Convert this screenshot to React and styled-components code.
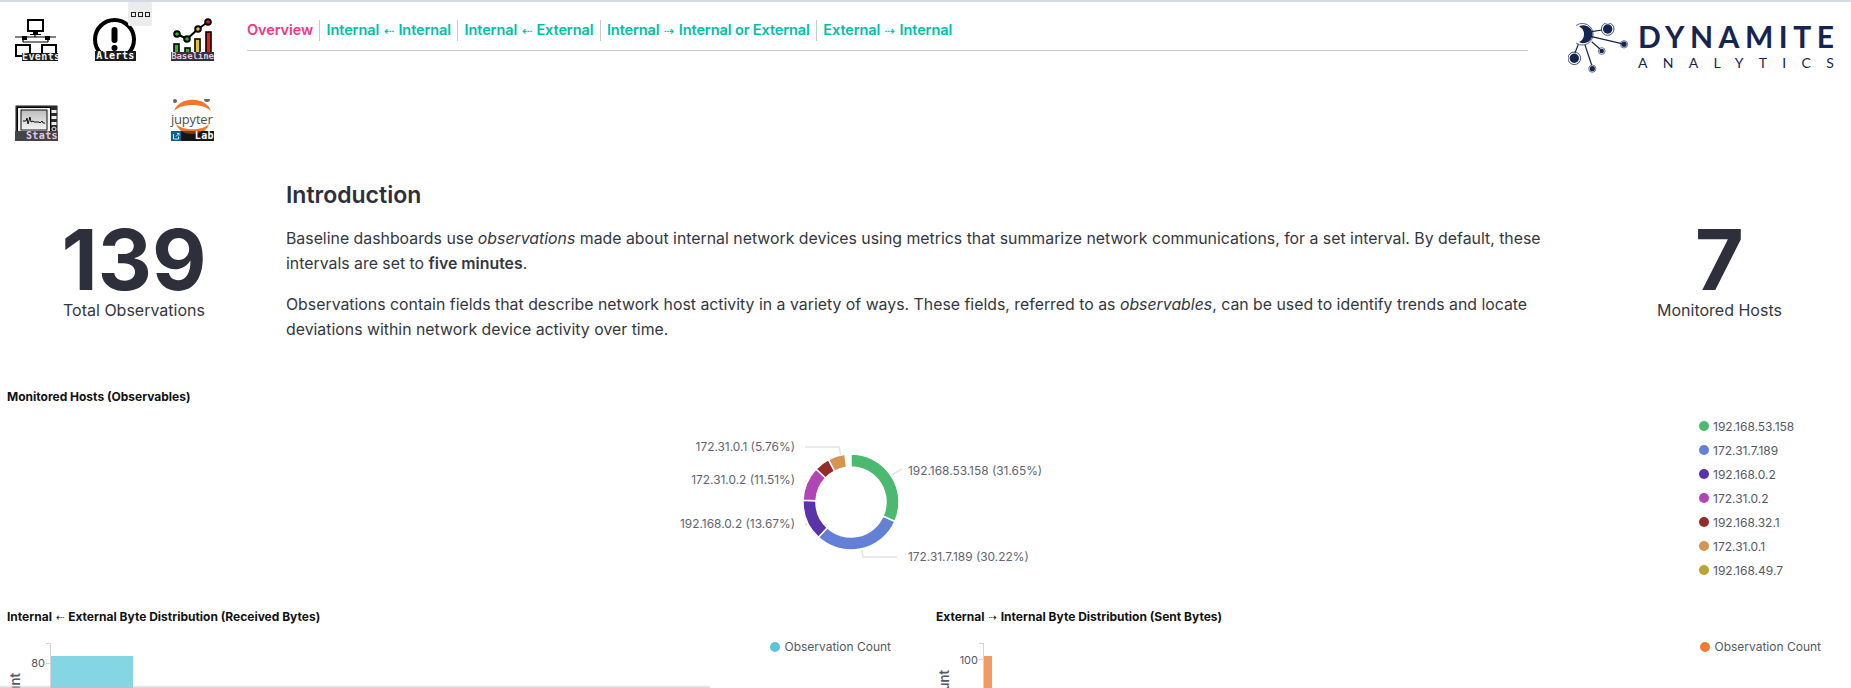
import React from "react";
import styled, { createGlobalStyle } from "styled-components";

const NAV_ITEMS = [
  "Internal ⇠ Internal",
  "Internal ⇠ External",
  "Internal ⇢ Internal or External",
  "External ⇢ Internal",
];

const HOSTS = [
  { name: "192.168.53.158", color: "#4cb971" },
  { name: "172.31.7.189", color: "#6480d6" },
  { name: "192.168.0.2", color: "#5a32aa" },
  { name: "172.31.0.2", color: "#b045b4" },
  { name: "192.168.32.1", color: "#942c2c" },
  { name: "172.31.0.1", color: "#d59450" },
  { name: "192.168.49.7", color: "#b9a434" },
];

const SLICES = [
  { color: "#4cb971", value: 31.65 },
  { color: "#6480d6", value: 30.22 },
  { color: "#5a32aa", value: 13.67 },
  { color: "#b045b4", value: 11.51 },
  { color: "#942c2c", value: 5.18 },
  { color: "#d59450", value: 5.76 },
];

function arcPath(from, to, outer, inner) {
  const point = (pct, r) => {
    const a = (pct / 100) * Math.PI * 2;
    return `${(Math.sin(a) * r).toFixed(2)} ${(-Math.cos(a) * r).toFixed(2)}`;
  };
  const large = to - from > 50 ? 1 : 0;
  return `M${point(from, outer)}A${outer} ${outer} 0 ${large} 1 ${point(to, outer)}L${point(to, inner)}A${inner} ${inner} 0 ${large} 0 ${point(from, inner)}Z`;
}

// the dashed arrows come from another font than the rest of the title
function WithArrows({ text }) {
  return text
    .split(/([⇠⇢])/)
    .map((part, i) => (i % 2 ? <Arrow key={i}>{part}</Arrow> : part));
}

function Donut() {
  let start = 0;
  return (
    <DonutSvg viewBox="0 0 420 150" width="420" height="150">
      <g fill="none" stroke="#e2e4e8" strokeWidth="1.5">
        <path d="M145 18H179L182 32" />
        <path d="M145 52L158 58" />
        <path d="M145 96L158 90" />
        <path d="M228 48L242 40" />
        <path d="M201 115L203 128H237" />
      </g>
      <g transform="translate(191 73)">
        {SLICES.map((s) => {
          const from = start;
          start += s.value;
          return (
            <path
              key={s.color}
              d={arcPath(from, start, 48, 35)}
              fill={s.color}
              stroke="#fff"
              strokeWidth="1.5"
            />
          );
        })}
      </g>
      <DonutLabel x="135" y="22" textAnchor="end">172.31.0.1 (5.76%)</DonutLabel>
      <DonutLabel x="135" y="55" textAnchor="end">172.31.0.2 (11.51%)</DonutLabel>
      <DonutLabel x="135" y="99" textAnchor="end">192.168.0.2 (13.67%)</DonutLabel>
      <DonutLabel x="248" y="46">192.168.53.158 (31.65%)</DonutLabel>
      <DonutLabel x="248" y="132">172.31.7.189 (30.22%)</DonutLabel>
    </DonutSvg>
  );
}

function EventsIcon() {
  return (
    <svg viewBox="0 0 43 43" width="43" height="43">
      <rect x="13" y="2" width="15" height="11" fill="#fff" stroke="#000" strokeWidth="2" />
      <path d="M18 14h5v2h3v1H15v-1h3z" fill="#000" />
      <path d="M0 19h41M20 17v2M8 19v5M33 19v5M8 24h25" stroke="#000" strokeWidth="1.2" fill="none" />
      <rect x="7" y="18" width="5" height="4" fill="#000" />
      <rect x="30" y="18" width="5" height="4" fill="#000" />
      <rect x="1" y="27" width="14" height="11" fill="#fff" stroke="#000" strokeWidth="2" />
      <rect x="27" y="27" width="14" height="11" fill="#fff" stroke="#000" strokeWidth="2" />
    </svg>
  );
}

function AlertsIcon() {
  return (
    <svg viewBox="0 0 43 43" width="43" height="43">
      <circle cx="21.5" cy="21.5" r="19.5" fill="#fff" stroke="#000" strokeWidth="4" />
      <rect x="18.5" y="9" width="6" height="16" rx="3" fill="#000" />
      <circle cx="21.5" cy="30" r="3" fill="#000" />
    </svg>
  );
}

function BaselineIcon() {
  return (
    <svg viewBox="0 0 43 43" width="43" height="43">
      <path d="M6 16L16 21L27 11L37 4" stroke="#000" strokeWidth="2" fill="none" />
      <rect x="3" y="26" width="5" height="12" fill="#2db52d" stroke="#000" strokeWidth="1.6" />
      <rect x="14" y="30" width="5" height="8" fill="#2db52d" stroke="#000" strokeWidth="1.6" />
      <rect x="24" y="21" width="5" height="17" fill="#e2c72a" stroke="#000" strokeWidth="1.6" />
      <rect x="35" y="14" width="5" height="24" fill="#e22222" stroke="#000" strokeWidth="1.6" />
      <circle cx="6" cy="16" r="2.800" fill="#2db52d" stroke="#000" strokeWidth="2" />
      <circle cx="16" cy="21" r="2.800" fill="#2db52d" stroke="#000" strokeWidth="2" />
      <circle cx="27" cy="11" r="2.800" fill="#e2c72a" stroke="#000" strokeWidth="2" />
      <circle cx="37" cy="4" r="2.800" fill="#e22222" stroke="#000" strokeWidth="2" />
    </svg>
  );
}

function StatsIcon() {
  return (
    <svg viewBox="0 0 43 36" width="43" height="36">
      <defs>
        <linearGradient id="statsScreen" x1="0" y1="0" x2="0" y2="1">
          <stop offset="0" stopColor="#bdbdbd" />
          <stop offset="1" stopColor="#f4f4f4" />
        </linearGradient>
      </defs>
      <rect x="0.5" y="0.5" width="42" height="35" rx="1" fill="#2a2a2a" stroke="#8a8a8a" />
      <rect x="2.500" y="2.500" width="33" height="24" fill="#f2f2f2" stroke="#000" />
      <rect x="6" y="5" width="26" height="20" fill="url(#statsScreen)" stroke="#111" />
      <path d="M8 16h3l1-3 1 6 2-7 1 5 2-1 1 1h5l1 1 2-2 1 2h2" stroke="#111" strokeWidth="1" fill="none" />
      <rect x="36.500" y="5" width="5" height="3" fill="#eee" />
      <rect x="36.500" y="11" width="5" height="3" fill="#eee" />
      <rect x="36.500" y="17" width="5" height="3" fill="#eee" />
      <circle cx="39" cy="24" r="2" fill="none" stroke="#eee" />
      <rect x="0" y="26" width="43" height="10" fill="#444" />
    </svg>
  );
}

function JupyterIcon() {
  return (
    <svg viewBox="0 0 43 43" width="43" height="43">
      <circle cx="4" cy="3" r="2" fill="#666" />
      <path d="M33 1a3 3 0 0 0 6 0z" fill="#666" />
      <path d="M3 13C8 -2 35 -2 40 13C32 5 11 5 3 13Z" fill="#f37726" />
      <path d="M5 26C12 33 31 33 38 26C34 40 10 40 5 26Z" fill="#f37726" />
      <rect x="0" y="33" width="43" height="10" fill="#161616" />
      <path d="M10 33h21c-3 4-16 4-21 0z" fill="#7c3a10" />
      <rect x="0" y="33" width="10" height="10" fill="#0f5f93" />
      <path d="M2.500 36v5h5v-2.500M5 38.500L8 35.500M6 35.500h2v2" stroke="#cfe9fa" strokeWidth="1" fill="none" />
    </svg>
  );
}

function DynamiteMark() {
  return (
    <svg viewBox="0 0 62 50" width="62" height="50">
      <g stroke="#16254f" strokeWidth="1.2" fill="none">
        <path d="M23.700 8.700L34 7" />
        <path d="M23.700 13.700L53.700 20.700" />
        <path d="M23.700 18.700L32 26" />
        <path d="M10.300 21.300L7 30" />
        <path d="M17 22L23.700 42" />
      </g>
      <path d="M11 3.500A9 9 0 1 1 11 19A8.500 8.500 0 0 0 11 3.500Z" fill="#16254f" />
      <path d="M8 2.500A10.800 10.800 0 1 1 8 20" stroke="#16254f" strokeWidth="0.7" fill="none" />
      <circle cx="39.700" cy="6" r="4.700" fill="#16254f" />
      <circle cx="39.700" cy="6" r="6.300" fill="none" stroke="#16254f" strokeWidth="0.8" />
      <circle cx="56" cy="21.300" r="2.700" fill="#16254f" />
      <circle cx="56" cy="21.300" r="3.700" fill="none" stroke="#16254f" strokeWidth="0.6" />
      <circle cx="33.700" cy="28" r="2.300" fill="#16254f" />
      <circle cx="33.700" cy="28" r="3.400" fill="none" stroke="#16254f" strokeWidth="0.6" />
      <circle cx="6.300" cy="35.300" r="4.700" fill="#16254f" />
      <circle cx="6.300" cy="35.300" r="6.300" fill="none" stroke="#16254f" strokeWidth="0.8" />
      <circle cx="24.300" cy="45.700" r="2.600" fill="#16254f" />
      <circle cx="24.300" cy="45.700" r="3.600" fill="none" stroke="#16254f" strokeWidth="0.6" />
    </svg>
  );
}

function App() {
  return (
    <Page>
      <GlobalStyle />
      <Header>
        <IconGrid>
          <IconLink>
            <EventsIcon />
            <IconLabel $width="36px" $height="8px">Events</IconLabel>
          </IconLink>
          <IconLink>
            <AlertsIcon />
            <IconLabel $width="41px" $height="10px" $color="#fff" $center>Alerts</IconLabel>
            <MenuButton>
              <Dot />
              <Dot />
              <Dot />
            </MenuButton>
          </IconLink>
          <IconLink>
            <BaselineIcon />
            <IconLabel $width="43px" $height="9px" $color="#e3c8e8" $bg="#333" $size="9px" $center>Baseline</IconLabel>
          </IconLink>
          <IconLink>
            <StatsIcon />
            <IconLabel $width="33px" $height="10px" $color="#e3c8e8" $bg="#444">Stats</IconLabel>
          </IconLink>
          <span />
          <IconLink>
            <JupyterIcon />
            <JupyterWord>jupyter</JupyterWord>
            <IconLabel $width="20px" $height="10px" $color="#fff" $bg="transparent">Lab</IconLabel>
          </IconLink>
        </IconGrid>
        <Nav>
          <NavLink $active>Overview</NavLink>
          {NAV_ITEMS.map((item) => (
            <NavLink key={item}>
              <WithArrows text={item} />
            </NavLink>
          ))}
        </Nav>
        <Logo>
          <DynamiteMark />
          <LogoWords>
            <LogoTitle>DYNAMITE</LogoTitle>
            <LogoSub>ANALYTICS</LogoSub>
          </LogoWords>
        </Logo>
      </Header>

      <IntroRow>
        <Metric>
          <MetricValue>139</MetricValue>
          <MetricLabel>Total Observations</MetricLabel>
        </Metric>
        <Intro>
          <IntroTitle>Introduction</IntroTitle>
          <IntroText>
            Baseline dashboards use <em>observations</em> made about internal network devices using
            metrics that summarize network communications, for a set interval. By default, these
            intervals are set to <strong>five minutes</strong>.
          </IntroText>
          <IntroText>
            Observations contain fields that describe network host activity in a variety of ways.
            These fields, referred to as <em>observables</em>, can be used to identify trends and
            locate deviations within network device activity over time.
          </IntroText>
        </Intro>
        <Metric>
          <MetricValue>7</MetricValue>
          <MetricLabel>Monitored Hosts</MetricLabel>
        </Metric>
      </IntroRow>

      <HostsPanel>
        <PanelTitle>Monitored Hosts (Observables)</PanelTitle>
        <HostsBody>
          <Donut />
          <HostLegend>
            {HOSTS.map((h) => (
              <LegendItem key={h.name}>
                <LegendDot $color={h.color} />
                {h.name}
              </LegendItem>
            ))}
          </HostLegend>
        </HostsBody>
      </HostsPanel>

      <ChartRow>
        <ChartPanel>
          <PanelTitle>
            <WithArrows text="Internal ⇠ External Byte Distribution (Received Bytes)" />
          </PanelTitle>
          <ChartBody>
            <YTitle $top="30px">Count</YTitle>
            <Axis $left="43px">
              <Tick $top="0px" />
              <TickValue $top="13px">80</TickValue>
              <Tick $top="20px" />
              <Bar $color="#85d6e4" $top="13px" $width="82px" />
            </Axis>
            <ChartLegend $right="38px">
              <LegendDot $color="#5bc4dc" />
              Observation Count
            </ChartLegend>
          </ChartBody>
        </ChartPanel>
        <ChartPanel $right>
          <PanelTitle>
            <WithArrows text="External ⇢ Internal Byte Distribution (Sent Bytes)" />
          </PanelTitle>
          <ChartBody>
            <YTitle $top="27px">Count</YTitle>
            <Axis $left="47px">
              <Tick $top="0px" />
              <TickValue $top="10px">100</TickValue>
              <Tick $top="16px" />
              <TickValue $top="42px">80</TickValue>
              <Bar $color="#f29a62" $top="13px" $width="8px" />
            </Axis>
            <ChartLegend $right="23px">
              <LegendDot $color="#ef7b35" />
              Observation Count
            </ChartLegend>
          </ChartBody>
        </ChartPanel>
      </ChartRow>
      <BottomShadow />
    </Page>
  );
}

const GlobalStyle = createGlobalStyle`
  html, body {
    margin: 0;
    background: #fff;
    overflow: hidden;
  }
  body {
    font-family: Inter, "Liberation Sans", sans-serif;
    color: #343741;
  }
`;

const Page = styled.div`
  position: relative;
  width: 1851px;
  height: 688px;
  overflow: hidden;
  box-sizing: border-box;
  border-top: 2px solid #d3dae6;
`;

const Header = styled.header`
  display: flex;
  align-items: flex-start;
  height: 150px;
`;

const IconGrid = styled.div`
  display: grid;
  grid-template-columns: repeat(3, 43px);
  grid-auto-rows: 43px;
  gap: 37px 35px;
  box-sizing: border-box;
  width: 213px;
  padding: 16px 0 0 15px;
  flex: none;
`;

const IconLink = styled.div`
  position: relative;
  align-self: end;
  width: 43px;
  svg {
    display: block;
  }
`;

const IconLabel = styled.span`
  position: absolute;
  right: 0;
  bottom: 0;
  box-sizing: border-box;
  width: ${(p) => p.$width};
  height: ${(p) => p.$height};
  font: bold ${(p) => p.$size || "10px"} / ${(p) => p.$height} "DejaVu Sans Mono", monospace;
  letter-spacing: ${(p) => (p.$size ? "-0.100px" : "0.400px")};
  color: ${(p) => p.$color || "#eee"};
  background: ${(p) => p.$bg || "#1c1c1c"};
  text-align: ${(p) => (p.$center ? "center" : "right")};
  white-space: nowrap;
`;

const JupyterWord = styled.span`
  position: absolute;
  left: 0;
  top: 13px;
  font: 13px/16px "Open Sans", sans-serif;
  letter-spacing: -0.200px;
  color: #4e4e4e;
`;

const MenuButton = styled.button`
  position: absolute;
  left: 35px;
  top: -16px;
  width: 24px;
  height: 24px;
  display: flex;
  align-items: center;
  justify-content: center;
  gap: 2px;
  padding: 0;
  border: 0;
  border-radius: 2px;
  background: #ececec;
`;

const Dot = styled.i`
  display: block;
  width: 3px;
  height: 3px;
  border: 1px solid #222;
`;

const Nav = styled.nav`
  display: flex;
  align-items: center;
  width: 1281px;
  height: 49px;
  box-sizing: border-box;
  margin-left: 34px;
  padding-top: 8px;
  border-bottom: 1px solid #c4c6cb;
  flex: none;
`;

const NavLink = styled.a`
  font-size: 14.500px;
  font-weight: 600;
  line-height: 20px;
  letter-spacing: -0.100px;
  color: ${(p) => (p.$active ? "#f5357f" : "#00bfa9")};
  padding: 0 6.300px;
  border-left: 1px solid #c8cacd;
  white-space: nowrap;
  &:first-child {
    padding-left: 0;
    border-left: 0;
  }
`;

const Arrow = styled.span`
  font-family: "DejaVu Sans", sans-serif;
  font-weight: 400;
  font-size: 0.85em;
  margin: 0 1px;
`;

const Logo = styled.div`
  display: flex;
  align-items: flex-start;
  gap: 8px;
  margin: 21px 0 0 40px;
  color: #16254f;
`;

const LogoWords = styled.div`
  display: flex;
  flex-direction: column;
  margin-top: -4px;
`;

const LogoTitle = styled.div`
  font: 700 30px/35px Lato, sans-serif;
  letter-spacing: 5.500px;
  white-space: nowrap;
`;

const LogoSub = styled.div`
  font: 400 14px/18px Lato, sans-serif;
  letter-spacing: 15.300px;
  white-space: nowrap;
`;

const IntroRow = styled.section`
  display: grid;
  grid-template-columns: 268px 1320px 1fr;
  height: 238px;
  align-items: start;
`;

const Metric = styled.div`
  display: flex;
  flex-direction: column;
  align-items: center;
  margin-top: 67px;
`;

const MetricValue = styled.div`
  font-size: 84px;
  font-weight: 700;
  line-height: 81px;
  color: #2d2f3a;
`;

const MetricLabel = styled.div`
  font-size: 16px;
  line-height: 20px;
  color: #343741;
`;

const Intro = styled.div`
  padding: 28px 40px 0 18px;
`;

const IntroTitle = styled.h2`
  margin: 0 0 16px;
  font-size: 23px;
  font-weight: 600;
  line-height: 30px;
  color: #2d2f3a;
`;

const IntroText = styled.p`
  margin: 0 0 16px;
  font-size: 15.850px;
  line-height: 25px;
  color: #343741;
  strong {
    font-weight: 600;
  }
`;

const HostsPanel = styled.section`
  height: 220px;
  padding-left: 7px;
`;

const PanelTitle = styled.h3`
  margin: 0;
  font-size: 12px;
  font-weight: 700;
  line-height: 14px;
  color: #111;
  white-space: nowrap;
`;

const HostsBody = styled.div`
  display: flex;
  align-items: flex-start;
`;

const DonutSvg = styled.svg`
  display: block;
  flex: none;
  margin: 25px 0 0 653px;
`;

const DonutLabel = styled.text`
  font-size: 11.900px;
  fill: #5e6472;
`;

const HostLegend = styled.ul`
  list-style: none;
  margin: 10px 0 0 619px;
  padding: 0;
`;

const LegendItem = styled.li`
  display: flex;
  align-items: center;
  height: 24px;
  font-size: 12px;
  color: #535966;
  white-space: nowrap;
`;

const LegendDot = styled.span`
  width: 10px;
  height: 10px;
  border-radius: 50%;
  background: ${(p) => p.$color};
  margin-right: 4px;
  flex: none;
`;

const ChartRow = styled.section`
  display: flex;
`;

const ChartPanel = styled.div`
  flex: none;
  box-sizing: border-box;
  width: ${(p) => (p.$right ? "915px" : "929px")};
  padding-left: 7px;
`;

const ChartBody = styled.div`
  position: relative;
  height: 60px;
  margin-top: 18px;
`;

const YTitle = styled.span`
  position: absolute;
  left: 0;
  top: ${(p) => p.$top};
  font-size: 13px;
  font-weight: 600;
  color: #535966;
  writing-mode: vertical-rl;
  transform: rotate(180deg);
`;

const Axis = styled.div`
  position: relative;
  margin-left: ${(p) => p.$left};
  height: 60px;
  border-left: 1px solid #d3d5da;
`;

const Tick = styled.i`
  position: absolute;
  left: -5px;
  top: ${(p) => p.$top};
  width: 5px;
  height: 1px;
  background: #d3d5da;
`;

const TickValue = styled.span`
  position: absolute;
  right: 100%;
  top: ${(p) => p.$top};
  margin-right: 6px;
  font-size: 11px;
  line-height: 14px;
  color: #535966;
`;

const Bar = styled.div`
  position: absolute;
  left: 0;
  top: ${(p) => p.$top};
  width: ${(p) => p.$width};
  bottom: 0;
  background: ${(p) => p.$color};
`;

const ChartLegend = styled.div`
  position: absolute;
  right: ${(p) => p.$right};
  top: -4px;
  display: flex;
  align-items: center;
  font-size: 12px;
  color: #535966;
`;

const BottomShadow = styled.div`
  position: absolute;
  left: 0;
  bottom: 0;
  width: 710px;
  height: 3px;
  background: linear-gradient(rgba(255, 255, 255, 0), rgba(190, 190, 190, 0.7));
`;

export default App;
